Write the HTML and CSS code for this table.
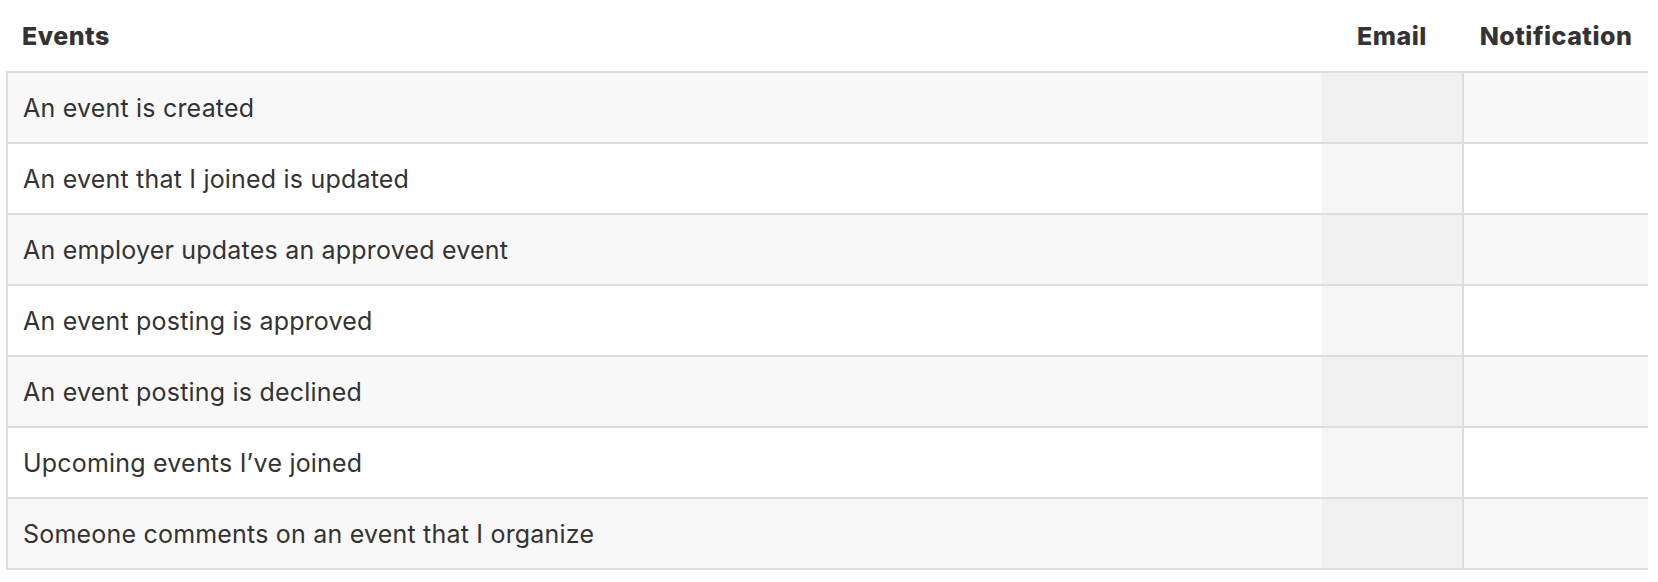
FILE: index.html
```html
<!DOCTYPE html>
<html>
<head>
<meta charset="utf-8">
<link rel="stylesheet" href="styles.css">
</head>
<body>
<div class="prefs">
  <div class="head">
    <div class="hcell first">Events</div>
    <div class="hcell center">Email</div>
    <div class="hcell center">Notification</div>
  </div>
  <div class="body">
    <div class="row"><div class="label">An event is created</div><div class="email"></div><div class="notif"></div></div>
    <div class="row"><div class="label">An event that I joined is updated</div><div class="email"></div><div class="notif"></div></div>
    <div class="row"><div class="label">An employer updates an approved event</div><div class="email"></div><div class="notif"></div></div>
    <div class="row"><div class="label">An event posting is approved</div><div class="email"></div><div class="notif"></div></div>
    <div class="row"><div class="label">An event posting is declined</div><div class="email"></div><div class="notif"></div></div>
    <div class="row"><div class="label">Upcoming events I’ve joined</div><div class="email"></div><div class="notif"></div></div>
    <div class="row"><div class="label">Someone comments on an event that I organize</div><div class="email"></div><div class="notif"></div></div>
  </div>
</div>
</body>
</html>
```

FILE: styles.css
```css
html, body {
  margin: 0;
  padding: 0;
  background: #ffffff;
}
body {
  font-family: Inter, "Noto Sans", sans-serif;
  color: #333333;
}
.prefs {
  margin-left: 6px;
  width: 1642px;
}
.head {
  display: grid;
  grid-template-columns: 1fr 140px 186px;
  height: 71px;
  align-items: center;
}
.hcell {
  font-size: 25px;
  font-weight: 800;
  letter-spacing: 0.5px;
  line-height: 30px;
}
.hcell.first {
  padding-left: 16px;
}
.hcell.center {
  text-align: center;
}
.hcell.center:last-child {
  padding-left: 2px;
}
.body {
  border-left: 2px solid #dddddd;
  border-top: 2px solid #dddddd;
}
.row {
  display: grid;
  grid-template-columns: 1fr 140px 186px;
  height: 69px;
  border-bottom: 2px solid #dddddd;
  background: #ffffff;
}
.row:nth-child(odd) {
  background: #f8f8f8;
}
.label {
  display: flex;
  align-items: center;
  padding-left: 15px;
  font-size: 25px;
  letter-spacing: 0.2px;
  line-height: 30px;
}
.email {
  background: #f5f5f5;
}
.row:nth-child(odd) .email {
  background: #f0f0f0;
}
.notif {
  border-left: 2px solid #dddddd;
}
```
